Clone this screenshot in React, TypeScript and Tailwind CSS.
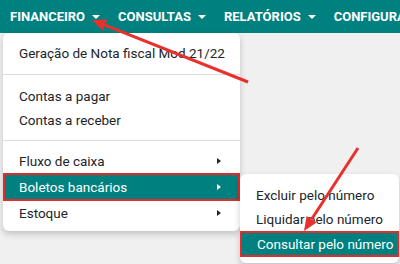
import React from "react";

const font = { fontFamily: "Roboto, 'Liberation Sans', sans-serif" };

function Caret() {
  return <span className="ml-[7px] inline-block border-x-[4px] border-t-[4px] border-x-transparent border-t-white align-middle" />;
}

function RightCaret({ light }: { light?: boolean }) {
  return (
    <span
      className={
        "inline-block border-y-[3.5px] border-l-[4px] border-y-transparent " +
        (light ? "border-l-white" : "border-l-[#212529]")
      }
    />
  );
}

function Item({ label, sub, active }: { label: string; sub?: boolean; active?: boolean }) {
  if (active) {
    return (
      <div className="flex h-[28px] items-center justify-between border-2 border-[#e42a2a] bg-[#00807f] pl-[14px] pr-[17px] text-white">
        <span>{label}</span>
        {sub && <RightCaret light />}
      </div>
    );
  }
  return (
    <div className="flex h-[24px] items-center justify-between pl-[16px] pr-[19px] text-[#212529]">
      <span>{label}</span>
      {sub && <RightCaret />}
    </div>
  );
}

export default function App() {
  return (
    <div className="relative h-[264px] w-[400px] overflow-hidden bg-[#f0f0f0]" style={font}>
      {/* Top navbar */}
      <nav className="flex h-[33px] items-center gap-[18px] overflow-hidden whitespace-nowrap bg-[#00807f] pl-[10px] text-[13px] font-bold text-white">
        <span className="flex shrink-0 items-center">FINANCEIRO<Caret /></span>
        <span className="flex shrink-0 items-center">CONSULTAS<Caret /></span>
        <span className="flex shrink-0 items-center">RELATÓRIOS<Caret /></span>
        <span className="flex shrink-0 items-center">CONFIGURAÇÕES<Caret /></span>
      </nav>

      {/* Dropdown menu */}
      <div className="absolute left-[3px] top-[33px] w-[237px] whitespace-nowrap rounded-md bg-white pb-[6px] pt-[8px] text-[13.5px] shadow-[0_3px_6px_rgba(0,0,0,0.2)]">
        <Item label="Geração de Nota fiscal Mod 21/22" />
        <div className="my-[9px] h-px bg-[#dcdcdc]" />
        <Item label="Contas a pagar" />
        <Item label="Contas a receber" />
        <div className="my-[8px] h-px bg-[#dcdcdc]" />
        <Item label="Fluxo de caixa" sub />
        <Item label="Boletos bancários" sub active />
        <Item label="Estoque" sub />
      </div>

      {/* Submenu */}
      <div className="absolute left-[240px] top-[174px] w-[159px] whitespace-nowrap rounded-md bg-white pb-[6px] pt-[9px] text-[13.5px] shadow-[0_3px_6px_rgba(0,0,0,0.2)]">
        <Item label="Excluir pelo número" />
        <Item label="Liquidar pelo número" />
        <div className="flex h-[26px] items-center border-2 border-[#e42a2a] bg-[#00807f] pl-[15px] text-white">
          Consultar pelo número
        </div>
      </div>

      {/* Annotation arrows */}
      <svg className="pointer-events-none absolute left-0 top-0" width={400} height={264}>
        <line x1={248} y1={82} x2={105} y2={25.2} stroke="#e8302c" strokeWidth={3} />
        <polygon points="92,20 107.2,19.6 102.8,30.8" fill="#e8302c" />
        <line x1={358} y1={148} x2={311.6} y2={219.3} stroke="#e8302c" strokeWidth={3} />
        <polygon points="304,231 306.6,216 316.6,222.6" fill="#e8302c" />
      </svg>
    </div>
  );
}
